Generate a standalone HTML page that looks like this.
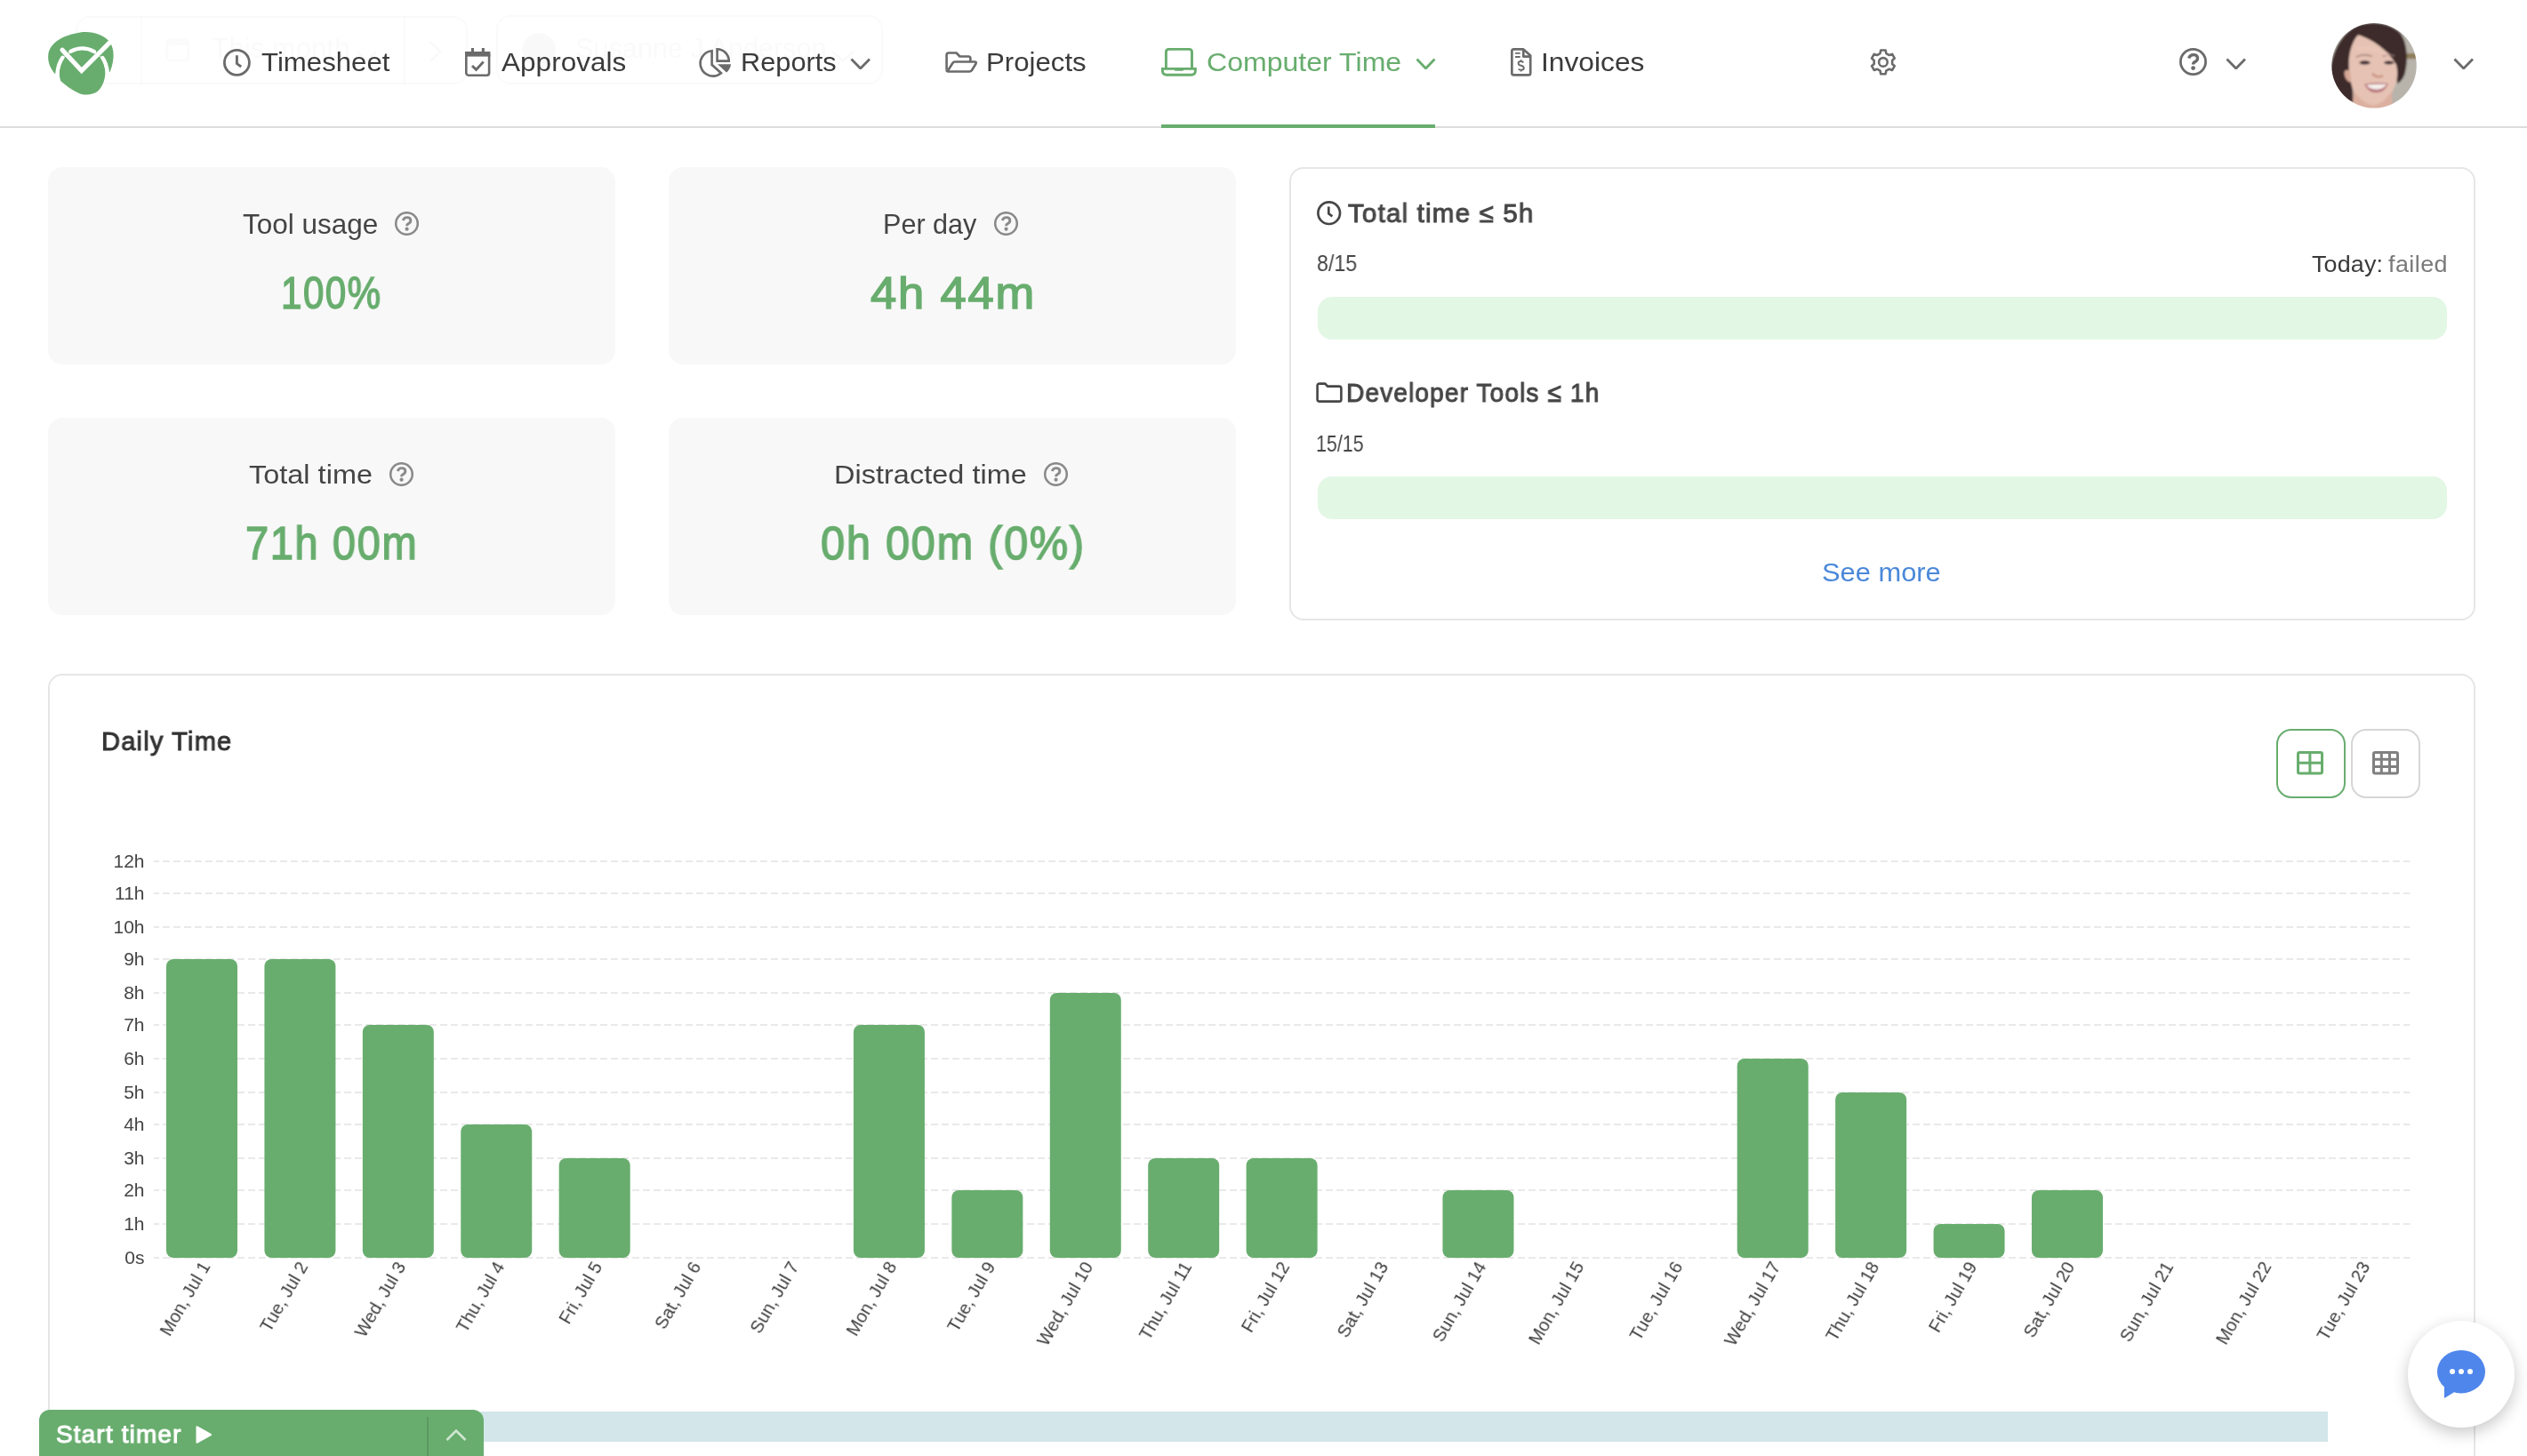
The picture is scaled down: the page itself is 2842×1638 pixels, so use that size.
<!DOCTYPE html>
<html><head><meta charset="utf-8"><title>Computer Time</title><style>
html,body{margin:0;padding:0;background:#fff;width:2842px;height:1638px;overflow:hidden;position:relative}
.a{position:absolute;display:block}
.t{position:absolute;white-space:pre;will-change:transform;font-family:'Liberation Sans',sans-serif;transform-origin:0 0}
.yl{left:62px;width:100.5px;text-align:right;font-size:21px;line-height:25px;color:#444}
.xl{width:400px;text-align:right;font-size:20px;line-height:22px;color:#3d3d3d;transform-origin:400px 11px;transform:rotate(-60deg)}
</style></head>
<body>
<div class="a" style="left:85px;top:18px;width:441px;height:77px;border:2px solid #000;border-radius:16px;opacity:.018;box-sizing:border-box"></div>
<div class="a" style="left:558px;top:17px;width:435px;height:78px;border:2px solid #000;border-radius:16px;opacity:.018;box-sizing:border-box"></div>
<svg class="a" style="left:186px;top:40px;opacity:.012" width="28" height="30" viewBox="0 0 28 30"><rect x="2" y="5" width="24" height="23" rx="3" fill="none" stroke="#000" stroke-width="3"/><rect x="2" y="5" width="24" height="6" fill="#000"/></svg>
<svg class="a" style="left:586px;top:36px;opacity:.018" width="40" height="40" viewBox="0 0 40 40"><circle cx="20" cy="20" r="19" fill="#000"/></svg>
<div class="a" style="left:158px;top:18px;width:2px;height:77px;background:#000;opacity:.015"></div>
<div class="a" style="left:454px;top:18px;width:2px;height:77px;background:#000;opacity:.015"></div>
<svg class="a" style="left:482px;top:45px;opacity:.02" width="16" height="26" viewBox="0 0 16 26"><path d="M2 2 L13 13 L2 24" fill="none" stroke="#000" stroke-width="2.8"/></svg>
<svg class="a" style="left:45px;top:30px;" width="90" height="82" viewBox="0 0 1598 1456"><path fill="#68ad6e" d="M 1395 905 L 1345 905 Q 1320 720 1245 625 L 1085 500 L 610 495 L 455 620 Q 360 740 345 930 L 292 935 C 190 810 150 680 165 560 C 190 330 450 170 800 115 C 1050 80 1270 170 1380 290 C 1440 370 1475 480 1465 620 C 1455 740 1425 830 1395 905 Z"/>
<path fill="#68ad6e" d="M 470 640 C 520 560 650 470 845 470 C 1040 470 1170 550 1225 640 C 1270 720 1300 820 1303 900 C 1305 1050 1250 1200 1150 1290 C 1050 1360 900 1380 780 1330 C 640 1270 500 1170 410 1080 C 380 990 380 880 400 800 C 415 740 440 690 470 640 Z"/>
<g fill="none" stroke="#fff" stroke-width="78" stroke-linecap="round">
<path d="M 452 618 Q 362 740 345 935"/>
<path d="M 1248 622 Q 1322 720 1347 910"/>
<path d="M 610 495 A 500 500 0 0 1 1085 500"/>
</g>
<path d="M 445 465 L 830 880 L 1480 230" fill="none" stroke="#fff" stroke-width="92" stroke-linecap="round" stroke-linejoin="miter"/></svg>
<svg class="a" style="left:251px;top:54.5px;" width="31" height="31" viewBox="0 0 31 31"><g fill="none" stroke="#6b6b6b" stroke-width="2.8"><circle cx="15.4" cy="15.4" r="14"/><path d="M15.4 7.2 V16.6 L20.2 20" stroke-width="2.9" stroke-linejoin="miter"/></g></svg>
<svg class="a" style="left:523px;top:54px;" width="29" height="32" viewBox="0 0 29 32"><g fill="none" stroke="#6b6b6b" stroke-width="2.6"><rect x="1.3" y="5.3" width="25.8" height="25.4" rx="2.6"/><path d="M8 20 L12.5 24.4 L20.7 15.6" stroke-width="2.9"/></g><rect x="0" y="4" width="28.4" height="5.6" fill="#6b6b6b"/><rect x="6.9" y="0" width="3.1" height="5" fill="#6b6b6b"/><rect x="18.8" y="0" width="3.1" height="5" fill="#6b6b6b"/></svg>
<svg class="a" style="left:782px;top:48px;" width="46" height="44" viewBox="0 0 46 44"><g fill="none" stroke="#6b6b6b" stroke-width="2.6" stroke-linejoin="miter"><path d="M18.6 9.2 L18.6 24.8 L29 34.2 A14.2 14.2 0 1 1 18.6 9.2 Z"/><path d="M24.6 7.3 L24.6 20.6 L37.8 20.6 A13.4 13.4 0 0 0 24.6 7.3 Z"/></g><path d="M25.1 24.2 L40 24.2 A14.6 14.6 0 0 1 35 33.6 Z" fill="#6b6b6b"/></svg>
<svg class="a" style="left:1058px;top:50px;" width="46" height="40" viewBox="0 0 46 40"><g fill="none" stroke="#6b6b6b" stroke-width="2.6" stroke-linejoin="round"><path d="M6.6 28.5 V11.8 Q6.6 9.5 8.9 9.5 H17.6 L21.4 13.5 H31.2 Q33.4 13.5 33.4 15.7 V19.4"/><path d="M7.6 30.2 L13.2 21.3 Q14.2 19.5 16 19.5 H38 Q40.6 19.5 39.5 21.8 L35 29 Q34 30.5 32.2 30.5 H8.6 Q6.6 30.5 6.6 28.5"/></g></svg>
<svg class="a" style="left:1300px;top:48px;" width="50" height="44" viewBox="0 0 50 44"><g fill="none" stroke="#68ad6e" stroke-width="2.9"><path d="M11.4 29 V10.6 Q11.4 7.4 14.6 7.4 H37.3 Q40.5 7.4 40.5 10.6 V29"/><path d="M7.4 29.4 H44.4 V31.6 Q44.4 36.3 39.6 36.3 H12.2 Q7.4 36.3 7.4 31.6 Z"/></g><rect x="20.8" y="29" width="10.3" height="2.8" rx="1.3" fill="#68ad6e"/></svg>
<svg class="a" style="left:1694px;top:48px;" width="34" height="44" viewBox="0 0 34 44"><g fill="none" stroke="#6b6b6b" stroke-width="2.7" stroke-linejoin="round"><path d="M19.3 7.4 H8.6 Q6.35 7.4 6.35 9.6 V34.2 Q6.35 36.4 8.6 36.4 H25 Q27.2 36.4 27.2 34.2 V14.4 Z"/><path d="M19.3 7.4 V15.6 H27.2"/></g><g fill="none" stroke="#6b6b6b" stroke-width="1.9"><path d="M10.1 11.9 H15.7 M10.1 16 H15.7"/><path d="M19.3 22.3 Q18.3 21 16.6 21 Q13.6 21 13.6 23.3 Q13.6 25.1 16.6 25.8 Q19.8 26.6 19.8 28.5 Q19.8 30.8 16.6 30.8 Q14.7 30.8 13.9 29.5 M16.6 19.3 V21 M16.6 30.8 V32.6"/></g></svg>
<svg class="a" style="left:2098px;top:50px;" width="40" height="40" viewBox="0 0 40 40"><g fill="none" stroke="#6b6b6b" stroke-width="2.6" stroke-linejoin="round"><path d="M16.53 10.06 L17.20 6.57 L22.60 6.57 L23.27 10.06 L26.74 12.06 L30.09 10.90 L32.79 15.58 L30.11 17.90 L30.11 21.90 L32.79 24.22 L30.09 28.90 L26.74 27.74 L23.27 29.74 L22.60 33.23 L17.20 33.23 L16.53 29.74 L13.06 27.74 L9.71 28.90 L7.01 24.22 L9.69 21.90 L9.69 17.90 L7.01 15.58 L9.71 10.90 L13.06 12.06 Z"/><circle cx="19.9" cy="19.9" r="4.8"/></g></svg>
<svg class="a" style="left:2450.8px;top:54.3px;" width="31" height="31" viewBox="0 0 31 31"><g transform="scale(1.0)"><circle cx="15.5" cy="15.5" r="14.1" fill="none" stroke="#6b6b6b" stroke-width="2.8"/><path d="M10.6 11.5 Q12 7.6 15.8 7.6 Q20.5 7.6 20.5 11.6 Q20.5 14.4 17.6 15.6 Q15.6 16.5 15.6 18.6" fill="none" stroke="#6b6b6b" stroke-width="3.4"/><circle cx="15.6" cy="22.6" r="2.4" fill="#6b6b6b"/></g></svg>
<svg class="a" style="left:2503px;top:64.5px;" width="23.5" height="13.5" viewBox="0 0 23.5 13.5"><path d="M1.5 1.5 L11.75 12.0 L22.0 1.5" fill="none" stroke="#6b6b6b" stroke-width="2.8"/></svg>
<svg class="a" style="left:2759px;top:64.5px;" width="23.5" height="13.5" viewBox="0 0 23.5 13.5"><path d="M1.5 1.5 L11.75 12.0 L22.0 1.5" fill="none" stroke="#6b6b6b" stroke-width="2.8"/></svg>
<svg class="a" style="left:956px;top:64.8px;" width="23.5" height="13.5" viewBox="0 0 23.5 13.5"><path d="M1.5 1.5 L11.75 12.0 L22.0 1.5" fill="none" stroke="#6b6b6b" stroke-width="2.8"/></svg>
<svg class="a" style="left:1592px;top:64.8px;" width="23" height="13.5" viewBox="0 0 23 13.5"><path d="M1.5 1.5 L11.5 12.0 L21.5 1.5" fill="none" stroke="#68ad6e" stroke-width="2.8"/></svg>
<svg class="a" style="opacity:.02;left:400px;top:56px;" width="25" height="14" viewBox="0 0 25 14"><path d="M1.5 1.5 L12.5 12.5 L23.5 1.5" fill="none" stroke="#000" stroke-width="2.8"/></svg>
<svg class="a" style="opacity:.02;left:934px;top:56px;" width="28" height="14" viewBox="0 0 28 14"><path d="M1.5 1.5 L14.0 12.5 L26.5 1.5" fill="none" stroke="#000" stroke-width="2.8"/></svg>
<svg class="a" style="left:2615px;top:20px;" width="110" height="110" viewBox="0 0 1456 1456"><defs><clipPath id="avc"><circle cx="728" cy="712" r="632"/></clipPath><filter id="avb" x="-5%" y="-5%" width="110%" height="110%"><feGaussianBlur stdDeviation="14"/></filter></defs>
<g clip-path="url(#avc)"><g filter="url(#avb)">
<rect x="-50" y="-50" width="1556" height="1556" fill="#b8b3ab"/>
<rect x="1180" y="530" width="220" height="80" fill="#8f7c58"/>
<path d="M 60 1000 C 60 560 230 220 500 110 C 720 40 960 80 1110 220 C 1220 350 1240 620 1190 820 C 1160 920 1110 960 1080 980 L 1000 700 C 900 500 700 330 480 270 C 430 400 400 600 380 800 L 430 1280 L 150 1320 Z" fill="#3c2c2b"/>
<path d="M 355 620 C 375 420 440 300 495 255 C 700 320 930 470 1060 700 C 1095 850 1065 1000 985 1120 C 905 1250 805 1300 720 1300 C 600 1300 480 1220 420 1080 C 370 950 345 780 355 620 Z" fill="#e6c2b4"/>
<path d="M 420 1080 C 500 1200 620 1300 720 1300 C 820 1300 920 1200 990 1100 L 1010 1500 L 400 1500 Z" fill="#dcb0a0"/>
<path d="M 285 830 C 280 770 340 760 370 800 L 385 960 C 330 960 295 900 285 830 Z" fill="#d6a797"/>
<ellipse cx="590" cy="668" rx="82" ry="28" fill="#3a2a30"/>
<ellipse cx="950" cy="668" rx="74" ry="26" fill="#3a2a30"/>
<path d="M 460 585 Q 580 525 700 575" stroke="#9a7a75" stroke-width="18" fill="none"/>
<path d="M 860 575 Q 960 530 1030 570" stroke="#9a7a75" stroke-width="18" fill="none"/>
<path d="M 585 985 Q 760 955 940 980 Q 890 1115 760 1115 Q 640 1115 585 985 Z" fill="#b8737a"/>
<path d="M 615 998 Q 760 982 915 992 Q 870 1065 760 1068 Q 660 1065 615 998 Z" fill="#f5efec"/>
<path d="M 700 830 Q 770 910 860 860" stroke="#c78f7e" stroke-width="28" fill="none"/>
<path d="M 470 470 Q 700 420 950 560" stroke="#ecc9bb" stroke-width="60" fill="none" opacity=".5"/>
</g></g></svg>
<div class="a" style="left:0;top:142px;width:2842px;height:2px;background:#dcdcdc"></div>
<div class="a" style="left:1306px;top:140px;width:308px;height:4px;background:#68ad6e"></div>
<div class="a" style="left:54px;top:188px;width:638px;height:222px;background:#f8f8f8;border-radius:16px"></div>
<div class="a" style="left:752px;top:188px;width:638px;height:222px;background:#f8f8f8;border-radius:16px"></div>
<div class="a" style="left:54px;top:470px;width:638px;height:222px;background:#f8f8f8;border-radius:16px"></div>
<div class="a" style="left:752px;top:470px;width:638px;height:222px;background:#f8f8f8;border-radius:16px"></div>
<svg class="a" style="left:444.3px;top:237.9px;" width="27" height="27" viewBox="0 0 27 27"><g transform="scale(0.8709677419354839)"><circle cx="15.5" cy="15.5" r="14.1" fill="none" stroke="#8a8a8a" stroke-width="2.9"/><path d="M10.6 11.5 Q12 7.6 15.8 7.6 Q20.5 7.6 20.5 11.6 Q20.5 14.4 17.6 15.6 Q15.6 16.5 15.6 18.6" fill="none" stroke="#8a8a8a" stroke-width="3.4"/><circle cx="15.6" cy="22.6" r="2.4" fill="#8a8a8a"/></g></svg>
<svg class="a" style="left:1118.3px;top:237.8px;" width="27" height="27" viewBox="0 0 27 27"><g transform="scale(0.8709677419354839)"><circle cx="15.5" cy="15.5" r="14.1" fill="none" stroke="#8a8a8a" stroke-width="2.9"/><path d="M10.6 11.5 Q12 7.6 15.8 7.6 Q20.5 7.6 20.5 11.6 Q20.5 14.4 17.6 15.6 Q15.6 16.5 15.6 18.6" fill="none" stroke="#8a8a8a" stroke-width="3.4"/><circle cx="15.6" cy="22.6" r="2.4" fill="#8a8a8a"/></g></svg>
<svg class="a" style="left:438.3px;top:520.1px;" width="27" height="27" viewBox="0 0 27 27"><g transform="scale(0.8709677419354839)"><circle cx="15.5" cy="15.5" r="14.1" fill="none" stroke="#8a8a8a" stroke-width="2.9"/><path d="M10.6 11.5 Q12 7.6 15.8 7.6 Q20.5 7.6 20.5 11.6 Q20.5 14.4 17.6 15.6 Q15.6 16.5 15.6 18.6" fill="none" stroke="#8a8a8a" stroke-width="3.4"/><circle cx="15.6" cy="22.6" r="2.4" fill="#8a8a8a"/></g></svg>
<svg class="a" style="left:1173.8px;top:519.9px;" width="27" height="27" viewBox="0 0 27 27"><g transform="scale(0.8709677419354839)"><circle cx="15.5" cy="15.5" r="14.1" fill="none" stroke="#8a8a8a" stroke-width="2.9"/><path d="M10.6 11.5 Q12 7.6 15.8 7.6 Q20.5 7.6 20.5 11.6 Q20.5 14.4 17.6 15.6 Q15.6 16.5 15.6 18.6" fill="none" stroke="#8a8a8a" stroke-width="3.4"/><circle cx="15.6" cy="22.6" r="2.4" fill="#8a8a8a"/></g></svg>
<div class="a" style="left:1450px;top:188px;width:1334px;height:510px;border:2px solid #e6e6e6;border-radius:16px;box-sizing:border-box"></div>
<div class="a" style="left:1482px;top:334px;width:1270px;height:48px;background:#e2f7e4;border-radius:16px"></div>
<div class="a" style="left:1482px;top:536px;width:1270px;height:48px;background:#e2f7e4;border-radius:16px"></div>
<svg class="a" style="left:1481px;top:225.5px;" width="28" height="28" viewBox="0 0 28 28"><g fill="none" stroke="#464646" stroke-width="2.7"><circle cx="13.7" cy="13.7" r="12.3"/><path d="M13.3 6.6 V14.3 L17.4 17.4"/></g></svg>
<svg class="a" style="left:1480px;top:430px;" width="30" height="23" viewBox="0 0 30 23"><path d="M1.6 4 Q1.6 1.6 4 1.6 H10.4 L13 4.6 H26 Q28.4 4.6 28.4 7 V19.4 Q28.4 21.6 26 21.6 H4 Q1.6 21.6 1.6 19.4 Z" fill="none" stroke="#464646" stroke-width="2.6" stroke-linejoin="round"/></svg>
<div class="a" style="left:54px;top:758px;width:2730px;height:1000px;border:2px solid #e6e6e6;border-radius:16px;box-sizing:border-box"></div>
<div class="a" style="left:2560px;top:820px;width:78px;height:78px;border:2px solid #68ad6e;border-radius:17px;box-sizing:border-box"></div>
<div class="a" style="left:2644px;top:820px;width:78px;height:78px;border:2px solid #d6d6d6;border-radius:17px;box-sizing:border-box"></div>
<svg class="a" style="left:2583px;top:845px;" width="30" height="27" viewBox="0 0 30 27"><g fill="none" stroke="#68ad6e" stroke-width="3"><rect x="1.5" y="1.5" width="27" height="23.6" rx="1.8"/><path d="M14.9 1.5 V25.1 M1.5 13.3 H28.5"/></g></svg>
<svg class="a" style="left:2668px;top:845px;" width="30" height="27" viewBox="0 0 30 27"><g fill="none" stroke="#808080" stroke-width="3"><rect x="1.5" y="1.5" width="27" height="23.6" rx="1.8"/><path d="M10.3 1.5 V25.1 M19.5 1.5 V25.1 M1.5 9.2 H28.5 M1.5 17.4 H28.5"/></g></svg>
<svg class="a" style="left:0;top:0" width="2842" height="1638"><g stroke="#e9e9e9" stroke-width="2" stroke-dasharray="8 4" stroke-dashoffset="2"><line x1="173" y1="1415" x2="2710.5" y2="1415"/><line x1="173" y1="1377" x2="2710.5" y2="1377"/><line x1="173" y1="1339" x2="2710.5" y2="1339"/><line x1="173" y1="1303" x2="2710.5" y2="1303"/><line x1="173" y1="1265" x2="2710.5" y2="1265"/><line x1="173" y1="1229" x2="2710.5" y2="1229"/><line x1="173" y1="1191" x2="2710.5" y2="1191"/><line x1="173" y1="1153" x2="2710.5" y2="1153"/><line x1="173" y1="1117" x2="2710.5" y2="1117"/><line x1="173" y1="1079" x2="2710.5" y2="1079"/><line x1="173" y1="1043" x2="2710.5" y2="1043"/><line x1="173" y1="1005" x2="2710.5" y2="1005"/><line x1="173" y1="969" x2="2710.5" y2="969"/></g></svg>
<div class="t yl" style="top:1402.40px">0s</div>
<div class="t yl" style="top:1364.40px">1h</div>
<div class="t yl" style="top:1326.40px">2h</div>
<div class="t yl" style="top:1290.40px">3h</div>
<div class="t yl" style="top:1252.40px">4h</div>
<div class="t yl" style="top:1216.40px">5h</div>
<div class="t yl" style="top:1178.40px">6h</div>
<div class="t yl" style="top:1140.40px">7h</div>
<div class="t yl" style="top:1104.40px">8h</div>
<div class="t yl" style="top:1066.40px">9h</div>
<div class="t yl" style="top:1030.40px">10h</div>
<div class="t yl" style="top:992.40px">11h</div>
<div class="t yl" style="top:956.40px">12h</div>
<svg class="a" style="left:0;top:0" width="2842" height="1638"><g fill="#68ad6e"><rect x="187.00" y="1079.00" width="80" height="336.00" rx="8" ry="8"/><rect x="297.42" y="1079.00" width="80" height="336.00" rx="8" ry="8"/><rect x="407.84" y="1153.00" width="80" height="262.00" rx="8" ry="8"/><rect x="518.26" y="1265.00" width="80" height="150.00" rx="8" ry="8"/><rect x="628.68" y="1303.00" width="80" height="112.00" rx="8" ry="8"/><rect x="959.94" y="1153.00" width="80" height="262.00" rx="8" ry="8"/><rect x="1070.36" y="1339.00" width="80" height="76.00" rx="8" ry="8"/><rect x="1180.78" y="1117.00" width="80" height="298.00" rx="8" ry="8"/><rect x="1291.20" y="1303.00" width="80" height="112.00" rx="8" ry="8"/><rect x="1401.62" y="1303.00" width="80" height="112.00" rx="8" ry="8"/><rect x="1622.46" y="1339.00" width="80" height="76.00" rx="8" ry="8"/><rect x="1953.72" y="1191.00" width="80" height="224.00" rx="8" ry="8"/><rect x="2064.14" y="1229.00" width="80" height="186.00" rx="8" ry="8"/><rect x="2174.56" y="1377.00" width="80" height="38.00" rx="8" ry="8"/><rect x="2284.98" y="1339.00" width="80" height="76.00" rx="8" ry="8"/></g></svg>
<div class="t xl" style="left:-169.50px;top:1409.60px">Mon, Jul 1</div>
<div class="t xl" style="left:-59.08px;top:1409.60px">Tue, Jul 2</div>
<div class="t xl" style="left:51.34px;top:1409.60px">Wed, Jul 3</div>
<div class="t xl" style="left:161.76px;top:1409.60px">Thu, Jul 4</div>
<div class="t xl" style="left:272.18px;top:1409.60px">Fri, Jul 5</div>
<div class="t xl" style="left:382.60px;top:1409.60px">Sat, Jul 6</div>
<div class="t xl" style="left:493.02px;top:1409.60px">Sun, Jul 7</div>
<div class="t xl" style="left:603.44px;top:1409.60px">Mon, Jul 8</div>
<div class="t xl" style="left:713.86px;top:1409.60px">Tue, Jul 9</div>
<div class="t xl" style="left:824.28px;top:1409.60px">Wed, Jul 10</div>
<div class="t xl" style="left:934.70px;top:1409.60px">Thu, Jul 11</div>
<div class="t xl" style="left:1045.12px;top:1409.60px">Fri, Jul 12</div>
<div class="t xl" style="left:1155.54px;top:1409.60px">Sat, Jul 13</div>
<div class="t xl" style="left:1265.96px;top:1409.60px">Sun, Jul 14</div>
<div class="t xl" style="left:1376.38px;top:1409.60px">Mon, Jul 15</div>
<div class="t xl" style="left:1486.80px;top:1409.60px">Tue, Jul 16</div>
<div class="t xl" style="left:1597.22px;top:1409.60px">Wed, Jul 17</div>
<div class="t xl" style="left:1707.64px;top:1409.60px">Thu, Jul 18</div>
<div class="t xl" style="left:1818.06px;top:1409.60px">Fri, Jul 19</div>
<div class="t xl" style="left:1928.48px;top:1409.60px">Sat, Jul 20</div>
<div class="t xl" style="left:2038.90px;top:1409.60px">Sun, Jul 21</div>
<div class="t xl" style="left:2149.32px;top:1409.60px">Mon, Jul 22</div>
<div class="t xl" style="left:2259.74px;top:1409.60px">Tue, Jul 23</div>
<div class="a" style="left:540px;top:1588px;width:2078px;height:34px;background:#d3e6e9"></div>
<div class="a" style="left:44px;top:1586px;width:500px;height:80px;background:#68ad6e;border-radius:12px 12px 0 0"></div>
<div class="a" style="left:480px;top:1594px;width:1.6px;height:44px;background:#5b9960"></div>
<svg class="a" style="left:219px;top:1603px;" width="20" height="22" viewBox="0 0 20 22"><path d="M1.5 2.5 Q1.5 0.5 3.3 1.5 L18.5 10 Q20 11 18.5 12 L3.3 20.5 Q1.5 21.5 1.5 19.5 Z" fill="#fff"/></svg>
<svg class="a" style="left:500.5px;top:1607.5px;" width="24" height="13.5" viewBox="0 0 24 13.5"><path d="M1.5 12.0 L12.0 1.5 L22.5 12.0" fill="none" stroke="#cfe6d0" stroke-width="2.6"/></svg>
<div class="a" style="left:2708px;top:1486px;width:120px;height:120px;border-radius:50%;background:#fff;box-shadow:0 6px 18px rgba(0,0,0,.22)"></div>
<svg class="a" style="left:2740px;top:1518px;" width="56" height="56" viewBox="0 0 56 56"><ellipse cx="28" cy="25.2" rx="27" ry="24.2" fill="#4f86ec"/><path d="M9 40 L9 55 L22 47 Z" fill="#4f86ec"/><g fill="#fff"><circle cx="18" cy="25" r="3"/><circle cx="28" cy="25" r="3"/><circle cx="38" cy="25" r="3"/></g></svg>
<div class="t" style="left:294.28px;top:55.02px;font-size:29.86px;line-height:29.86px;font-weight:400;color:#3b3b3b;letter-spacing:0.000px;transform:scaleX(1.0442);">Timesheet</div>
<div class="t" style="left:564.30px;top:55.02px;font-size:29.86px;line-height:29.86px;font-weight:400;color:#3b3b3b;letter-spacing:0.000px;transform:scaleX(1.0565);">Approvals</div>
<div class="t" style="left:832.54px;top:55.02px;font-size:29.86px;line-height:29.86px;font-weight:400;color:#3b3b3b;letter-spacing:0.000px;transform:scaleX(1.0305);">Reports</div>
<div class="t" style="left:1109.20px;top:55.02px;font-size:29.86px;line-height:29.86px;font-weight:400;color:#3b3b3b;letter-spacing:0.000px;transform:scaleX(1.0450);">Projects</div>
<div class="t" style="left:1357.00px;top:55.02px;font-size:29.86px;line-height:29.86px;font-weight:400;color:#68ad6e;letter-spacing:0.000px;transform:scaleX(1.0739);">Computer Time</div>
<div class="t" style="left:1732.54px;top:55.02px;font-size:29.86px;line-height:29.86px;font-weight:400;color:#3b3b3b;letter-spacing:0.000px;transform:scaleX(1.0635);">Invoices</div>
<div class="t" style="left:273.07px;top:236.61px;font-size:30.58px;line-height:30.58px;font-weight:400;color:#444444;letter-spacing:0.000px;transform:scaleX(1.0297);">Tool usage</div>
<div class="t" style="left:993.26px;top:236.61px;font-size:30.58px;line-height:30.58px;font-weight:400;color:#444444;letter-spacing:0.000px;transform:scaleX(0.9986);">Per day</div>
<div class="t" style="left:279.85px;top:518.70px;font-size:30.00px;line-height:30.00px;font-weight:400;color:#444444;letter-spacing:0.028px;transform:scaleX(1.0800);">Total time</div>
<div class="t" style="left:938.01px;top:518.70px;font-size:30.00px;line-height:30.00px;font-weight:400;color:#444444;letter-spacing:0.052px;transform:scaleX(1.0800);">Distracted time</div>
<div class="t" style="left:315.53px;top:305.45px;font-size:50.29px;line-height:50.29px;font-weight:400;color:#68ad6e;letter-spacing:1.760px;transform:scaleX(0.8368);-webkit-text-stroke:1.5px #68ad6e">100%</div>
<div class="t" style="left:978.75px;top:305.45px;font-size:50.29px;line-height:50.29px;font-weight:400;color:#68ad6e;letter-spacing:1.760px;transform:scaleX(1.0439);-webkit-text-stroke:1.5px #68ad6e">4h 44m</div>
<div class="t" style="left:275.65px;top:586.27px;font-size:51.45px;line-height:51.45px;font-weight:400;color:#68ad6e;letter-spacing:1.801px;transform:scaleX(0.9124);-webkit-text-stroke:1.5px #68ad6e">71h 00m</div>
<div class="t" style="left:922.95px;top:586.27px;font-size:51.45px;line-height:51.45px;font-weight:400;color:#68ad6e;letter-spacing:1.801px;transform:scaleX(0.9477);-webkit-text-stroke:1.5px #68ad6e">0h 00m (0%)</div>
<div class="t" style="left:1515.71px;top:224.62px;font-size:29.86px;line-height:29.86px;font-weight:400;color:#464646;letter-spacing:1.194px;transform:scaleX(0.9890);-webkit-text-stroke:1px #464646">Total time ≤ 5h</div>
<div class="t" style="left:1481.07px;top:284.37px;font-size:25.22px;line-height:25.22px;font-weight:400;color:#464646;letter-spacing:0.000px;transform:scaleX(0.9225);">8/15</div>
<div class="t" style="left:2600.36px;top:284.51px;font-size:24.93px;line-height:24.93px;font-weight:400;color:#3a3a3a;letter-spacing:0.119px;transform:scaleX(1.0800);">Today:</div>
<div class="t" style="left:2685.53px;top:284.51px;font-size:24.93px;line-height:24.93px;font-weight:400;color:#7a7a7a;letter-spacing:0.415px;transform:scaleX(1.0800);">failed</div>
<div class="t" style="left:1513.55px;top:427.08px;font-size:30.14px;line-height:30.14px;font-weight:400;color:#464646;letter-spacing:1.206px;transform:scaleX(0.9314);-webkit-text-stroke:1px #464646">Developer Tools ≤ 1h</div>
<div class="t" style="left:1479.59px;top:485.93px;font-size:26.09px;line-height:26.09px;font-weight:400;color:#464646;letter-spacing:0.000px;transform:scaleX(0.8214);">15/15</div>
<div class="t" style="left:2049.46px;top:629.61px;font-size:28.70px;line-height:28.70px;font-weight:400;color:#4a88d9;letter-spacing:0.000px;transform:scaleX(1.0750);">See more</div>
<div class="t" style="left:114.47px;top:818.85px;font-size:29.71px;line-height:29.71px;font-weight:400;color:#333333;letter-spacing:1.188px;transform:scaleX(0.9789);-webkit-text-stroke:1px #333333">Daily Time</div>
<div class="t" style="left:63.00px;top:1598.56px;font-size:28.41px;line-height:28.41px;font-weight:400;color:#ffffff;letter-spacing:1.136px;transform:scaleX(0.9857);-webkit-text-stroke:1px #ffffff">Start timer</div>
<div class="t" style="left:238.37px;top:38.90px;font-size:31.88px;line-height:31.88px;font-weight:400;color:#000;letter-spacing:0.000px;transform:scaleX(0.9874);opacity:.022">This month</div>
<div class="t" style="left:647.47px;top:38.90px;font-size:31.88px;line-height:31.88px;font-weight:400;color:#000;letter-spacing:0.000px;transform:scaleX(0.9605);opacity:.022">Susanne J Anderson</div>
</body></html>
